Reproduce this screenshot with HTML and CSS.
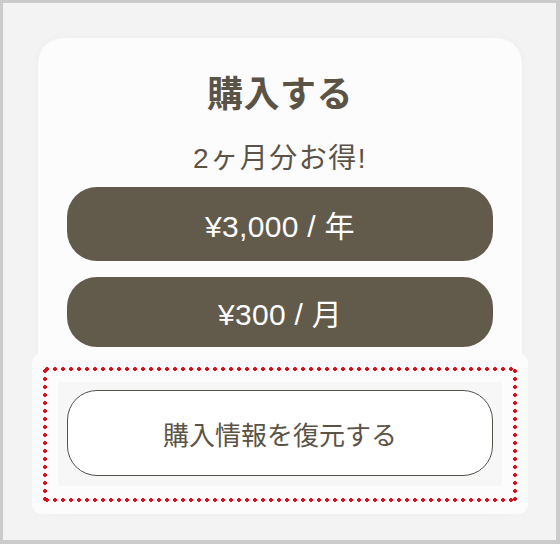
FILE: index.html
```html
<!DOCTYPE html>
<html lang="ja">
<head>
  <meta charset="UTF-8">
  <meta name="viewport" content="width=device-width, initial-scale=1.0">
  <title>購入する</title>
  <link rel="stylesheet" href="styles.css">
</head>
<body>
  <div class="frame">
    <div class="card">
      <h1 class="title">購入する</h1>
      <p class="deal">2ヶ月分お得!</p>

      <div class="plans">
        <button class="plan-button yearly">¥3,000 / 年</button>
        <button class="plan-button monthly">¥300 / 月</button>
      </div>

      <!-- Restore section (highlighted) -->
      <div class="restore-panel">
        <div class="highlight">
          <div class="restore-inner">
            <button class="restore-button">購入情報を復元する</button>
          </div>
        </div>
      </div>
    </div>
  </div>
</body>
</html>
```

FILE: styles.css
```css
/* General reset */
* {
  margin: 0;
  padding: 0;
  box-sizing: border-box;
}

body {
  font-family: "Liberation Sans", "Noto Sans CJK JP", sans-serif;
  background-color: #f3f3f3;
  color: #5b5346;
}

.frame {
  width: 560px;
  height: 544px;
  border: 3px solid #cbcbcb;
  border-right-width: 4px;
  border-bottom-width: 4px;
  background: #f3f3f3;
  padding: 35px 0 0 35px;
}

.card {
  width: 484px;
  background: #fcfcfc;
  border-radius: 25px;
  box-shadow: 0 0 10px rgba(0, 0, 0, 0.03);
  padding: 0 29px;
  display: flex;
  flex-direction: column;
  align-items: stretch;
}

.title {
  margin-top: 32px;
  font-family: "Noto Sans CJK JP", sans-serif;
  font-size: 36px;
  line-height: 42px;
  font-weight: 700;
  text-align: center;
  letter-spacing: 0.5px;
}

.deal {
  margin-top: 30px;
  font-size: 28px;
  line-height: 34px;
  letter-spacing: 1.5px;
  text-align: center;
}

.plans {
  margin-top: 11px;
  display: flex;
  flex-direction: column;
  gap: 16px;
}

.plan-button {
  font-family: inherit;
  font-size: 30px;
  letter-spacing: 0.3px;
  color: #ffffff;
  background: #625a4b;
  border: none;
  border-radius: 30px;
  cursor: pointer;
}

.plan-button.yearly {
  height: 74px;
}

.plan-button.monthly {
  height: 70px;
}

.restore-panel {
  margin: 6px -35px 0;
  background: #fcfcfc;
  border-radius: 10px;
  padding: 14px 11px 12px;
}

/* dotted red frame, 8px dot pitch */
.highlight {
  padding: 15px 15px 16px;
  background:
    radial-gradient(circle, #d3121c 1.7px, transparent 2.2px) 0 0 / 8px 4px repeat-x,
    radial-gradient(circle, #d3121c 1.7px, transparent 2.2px) 0 100% / 8px 4px repeat-x,
    radial-gradient(circle, #d3121c 1.7px, transparent 2.2px) 0 0 / 4px 8px repeat-y,
    radial-gradient(circle, #d3121c 1.7px, transparent 2.2px) 100% 0 / 4px 8px repeat-y;
}

.restore-inner {
  background: #f7f7f7;
  padding: 8px 9px 10px;
}

.restore-button {
  width: 100%;
  height: 86px;
  font-family: inherit;
  font-size: 26px;
  color: #5b5346;
  background: #ffffff;
  border: 1.5px solid #555049;
  border-radius: 30px;
  cursor: pointer;
}
```
